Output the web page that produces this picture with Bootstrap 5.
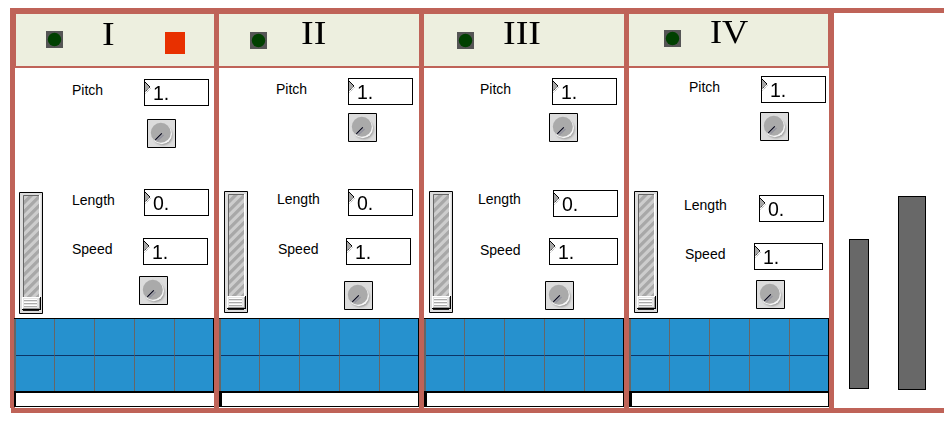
<!DOCTYPE html>
<html lang="en">
<head>
<meta charset="utf-8">
<title>Sampler decks</title>
<link href="https://cdn.jsdelivr.net/npm/bootstrap@5.3.0/dist/css/bootstrap.min.css" rel="stylesheet">
<style>
:root{--frame:#bf6358}
body{font-family:"Liberation Sans",Arial,sans-serif;color:#000;background:#fff;line-height:16px}
.rack{width:944px;height:430px;padding:8px 0 0 10px}
.rail-top{height:5px;background:var(--frame)}
.rail-bottom{height:5px;margin-left:1px;background:var(--frame)}
.decks{height:395px}
.post{width:5px;flex:none;background:var(--frame)}
.deck{width:200px;flex:none;height:395px}
.deck-head{height:55px;background:#edefdf;border-top:1px solid var(--frame);border-bottom:2px solid var(--frame)}
.deck-body{height:250px}
.led{width:17px;height:17px;flex:none}
.numeral{font:33px/34px "Liberation Serif","Times New Roman",serif;width:40px;transform:scaleX(1.15);transform-origin:0 0;white-space:nowrap}
.rec{width:20px;height:22px;margin:18px 0 0 23px;background:#e83000}
.fader-col{width:51px;flex:none}.label-col{width:59px;flex:none;font-size:14px}.value-col{width:89px;flex:none}
.fader{display:block;width:24px;height:122px;margin:123px 0 0 5px}
.label-col div{height:16px;white-space:nowrap}
.num{display:flex;width:65px;height:27px;border:1px solid #000;background:#fff;font-size:21px;line-height:26px}
.num svg{width:8px;height:25px;flex:none}
.num span{transform:scaleX(.93);transform-origin:0 0}
.wide{width:69px}
.knob{display:block;width:29px;height:29px}
.pads{height:75px;display:grid;grid-template-columns:40px 40px 40px 40px 39px;grid-template-rows:37px 35px;border:solid #000;border-width:1px 1px 2px 0;background:#2691ce;box-shadow:inset 2px 0 #666}
.pads i{border-left:1px solid #666}
.pads i:nth-child(5n+1){border-left:0;margin-left:2px}
.pads i:nth-child(-n+5){border-bottom:1px solid #0b3568}
.strip{height:14px;border:solid #000;border-width:0 1px 1px 3px}
.meter{background:#686868;border:1px solid #000}
.meter-a{width:20px;height:150px;margin:226px 0 0 15px}
.meter-b{width:28px;height:194px;margin:183px 0 0 29px}

.d1{width:199px}
.d1 .deck-head{border-left:1px solid var(--frame)}
.d1 .led{margin:17px 0 0 30px}.d1 .numeral{margin:3px 0 0 39px}
.d1 .fader{margin:124px 0 0 4px}
.d1 .l1{margin:14px 0 0 6px}.d1 .l2{margin:94px 0 0 6px}.d1 .l3{margin:33px 0 0 6px}
.d1 .n1{margin:11px 0 0 19px}.d1 .k1{margin:13px 0 0 22px}.d1 .n2{margin:41px 0 0 19px}.d1 .n3{margin:22px 0 0 18px}.d1 .k2{margin:11px 0 0 14px}
.d1 .pads{position:relative;z-index:0}.d1 .pads,.d1 .strip{margin-left:-1px}.d1 .strip{border-left-width:2px;border-right:0}

.d2 .led{margin:18px 0 0 31px}.d2 .numeral{margin:2px 0 0 34px}
.d2 .l1{margin:13px 0 0 6px}.d2 .l2{margin:94px 0 0 7px}.d2 .l3{margin:34px 0 0 8px}
.d2 .n1{margin:10px 0 0 19px}.d2 .k1{margin:8px 0 0 19px}.d2 .n2{margin:47px 0 0 19px}.d2 .n3{margin:22px 0 0 17px}.d2 .k2{margin:16px 0 0 15px}

.d3 .led{margin:18px 0 0 33px}.d3 .numeral{margin:2px 0 0 29px}
.d3 .l1{margin:13px 0 0 5px}.d3 .l2{margin:94px 0 0 3px}.d3 .l3{margin:35px 0 0 5px}
.d3 .n1{margin:10px 0 0 18px}.d3 .k1{margin:8px 0 0 15px}.d3 .n2{margin:48px 0 0 19px}.d3 .n3{margin:21px 0 0 15px}.d3 .k2{margin:16px 0 0 11px}

.d4 .deck-head{border-right:1px solid var(--frame)}
.d4 .led{margin:16px 0 0 35px}.d4 .numeral{margin:1px 0 0 29px;transform:scaleX(1.1)}
.d4 .l1{margin:11px 0 0 9px}.d4 .l2{margin:102px 0 0 4px}.d4 .l3{margin:33px 0 0 5px}
.d4 .n1{margin:8px 0 0 22px}.d4 .k1{margin:9px 0 0 21px}.d4 .n2{margin:54px 0 0 20px}.d4 .n3{margin:21px 0 0 15px}.d4 .k2{margin:10px 0 0 17px}
</style>
<script src="https://cdn.jsdelivr.net/npm/bootstrap@5.3.0/dist/js/bootstrap.bundle.min.js"></script>
</head>
<body>
<svg width="0" height="0" class="position-absolute">
  <defs>
    <pattern id="hatch" width="9" height="9" patternUnits="userSpaceOnUse"><path d="M0 0h9v9H0z" fill="#cdcdcd"/><path d="M0 4.500L4.500 0H9L0 9zM9 4.500V9H4.500z" fill="#a8a8a8"/></pattern>
    <filter id="soft" x="-30%" y="-30%" width="160%" height="160%"><feGaussianBlur stdDeviation="1"/></filter>
  </defs>
  <symbol id="led" viewBox="0 0 17 17"><path d="M0 0h17v17H0z" fill="#555"/><circle cx="8.500" cy="8.500" r="6.700" fill="#004000"/></symbol>
  <symbol id="arrow" viewBox="0 0 8 25"><path d="M0 2l5 5-5 5z" fill="#a6a6a6"/><path d="M0 2l5 5" stroke="#000" stroke-width="1"/><path d="M5 7l-5 5" stroke="#333" stroke-width="1" stroke-dasharray="1.400 .8"/><path d="M5.500 8.500L0 14" stroke="#777" stroke-width=".8" stroke-dasharray="1 1"/></symbol>
  <symbol id="knob" viewBox="0 0 29 29"><path d="M.5.500h28v28H.5z" fill="#dcdcdc" stroke="#000"/><circle cx="16" cy="16.500" r="9.500" fill="#8e8e8e" filter="url(#soft)"/><circle cx="14.800" cy="15" r="10.200" fill="#f4f4f4"/><circle cx="13.800" cy="13.800" r="10" fill="#aaa"/><path d="M10.500 21.500l6-5.500" stroke="#92929e" stroke-width="1.500"/><path d="M8.300 20.800l6.500-6.500" stroke="#000018" stroke-width="1.100"/></symbol>
  <symbol id="fader" viewBox="0 0 24 122"><path d="M.5.500h23v121H.5z" fill="#dcdcdc" stroke="#000"/><path d="M4 3h16v115H4z" fill="url(#hatch)"/><path d="M20 3h1.500v115H20z" fill="#fff"/><path d="M4.500 119V3.500H20" fill="none" stroke="#666"/><path d="M4 118h16v1H4z" fill="#222"/><path d="M3 105h19v13H3z" fill="#000"/><path d="M3 105h18v12H3z" fill="#fff"/><path d="M4 106h16v10H4z" fill="#e4e4e4"/><path d="M20 106h1v11H4v-1h16z" fill="#999"/><path d="M5 107h13v1H5zM5 110h13v1H5zM5 113h13v1H5z" fill="#fff"/><path d="M5 108h13v1H5zM5 111h13v1H5zM5 114h13v1H5z" fill="#aaa"/></symbol>
</svg>

<main class="rack overflow-hidden">
  <div class="rail-top"></div>
  <div class="decks d-flex">
    <div class="post"></div>
    <section class="deck d1">
      <header class="deck-head d-flex align-items-start"><svg class="led"><use href="#led"/></svg><div class="numeral">I</div><div class="rec"></div></header>
      <div class="deck-body d-flex align-items-start">
        <div class="fader-col"><svg class="fader"><use href="#fader"/></svg></div>
        <div class="label-col d-flex flex-column"><div class="l1">Pitch</div><div class="l2">Length</div><div class="l3">Speed</div></div>
        <div class="value-col d-flex flex-column">
          <div class="num n1"><svg><use href="#arrow"/></svg><span>1.</span></div><svg class="knob k1"><use href="#knob"/></svg>
          <div class="num n2"><svg><use href="#arrow"/></svg><span>0.</span></div><div class="num n3"><svg><use href="#arrow"/></svg><span>1.</span></div><svg class="knob k2"><use href="#knob"/></svg>
        </div>
      </div>
      <div class="pads"><i></i><i></i><i></i><i></i><i></i><i></i><i></i><i></i><i></i><i></i></div>
      <div class="strip"></div>
    </section>
    <div class="post"></div>
    <section class="deck d2">
      <header class="deck-head d-flex align-items-start"><svg class="led"><use href="#led"/></svg><div class="numeral">II</div></header>
      <div class="deck-body d-flex align-items-start">
        <div class="fader-col"><svg class="fader"><use href="#fader"/></svg></div>
        <div class="label-col d-flex flex-column"><div class="l1">Pitch</div><div class="l2">Length</div><div class="l3">Speed</div></div>
        <div class="value-col d-flex flex-column">
          <div class="num n1"><svg><use href="#arrow"/></svg><span>1.</span></div><svg class="knob k1"><use href="#knob"/></svg>
          <div class="num n2"><svg><use href="#arrow"/></svg><span>0.</span></div><div class="num n3"><svg><use href="#arrow"/></svg><span>1.</span></div><svg class="knob k2"><use href="#knob"/></svg>
        </div>
      </div>
      <div class="pads"><i></i><i></i><i></i><i></i><i></i><i></i><i></i><i></i><i></i><i></i></div>
      <div class="strip"></div>
    </section>
    <div class="post"></div>
    <section class="deck d3">
      <header class="deck-head d-flex align-items-start"><svg class="led"><use href="#led"/></svg><div class="numeral">III</div></header>
      <div class="deck-body d-flex align-items-start">
        <div class="fader-col"><svg class="fader"><use href="#fader"/></svg></div>
        <div class="label-col d-flex flex-column"><div class="l1">Pitch</div><div class="l2">Length</div><div class="l3">Speed</div></div>
        <div class="value-col d-flex flex-column">
          <div class="num n1"><svg><use href="#arrow"/></svg><span>1.</span></div><svg class="knob k1"><use href="#knob"/></svg>
          <div class="num n2"><svg><use href="#arrow"/></svg><span>0.</span></div><div class="num wide n3"><svg><use href="#arrow"/></svg><span>1.</span></div><svg class="knob k2"><use href="#knob"/></svg>
        </div>
      </div>
      <div class="pads"><i></i><i></i><i></i><i></i><i></i><i></i><i></i><i></i><i></i><i></i></div>
      <div class="strip"></div>
    </section>
    <div class="post"></div>
    <section class="deck d4">
      <header class="deck-head d-flex align-items-start"><svg class="led"><use href="#led"/></svg><div class="numeral">IV</div></header>
      <div class="deck-body d-flex align-items-start">
        <div class="fader-col"><svg class="fader"><use href="#fader"/></svg></div>
        <div class="label-col d-flex flex-column"><div class="l1">Pitch</div><div class="l2">Length</div><div class="l3">Speed</div></div>
        <div class="value-col d-flex flex-column">
          <div class="num n1"><svg><use href="#arrow"/></svg><span>1.</span></div><svg class="knob k1"><use href="#knob"/></svg>
          <div class="num n2"><svg><use href="#arrow"/></svg><span>0.</span></div><div class="num wide n3"><svg><use href="#arrow"/></svg><span>1.</span></div><svg class="knob k2"><use href="#knob"/></svg>
        </div>
      </div>
      <div class="pads"><i></i><i></i><i></i><i></i><i></i><i></i><i></i><i></i><i></i><i></i></div>
      <div class="strip"></div>
    </section>
    <div class="post"></div>
    <div class="meter meter-a"></div>
    <div class="meter meter-b"></div>
  </div>
  <div class="rail-bottom"></div>
</main>
</body>
</html>
